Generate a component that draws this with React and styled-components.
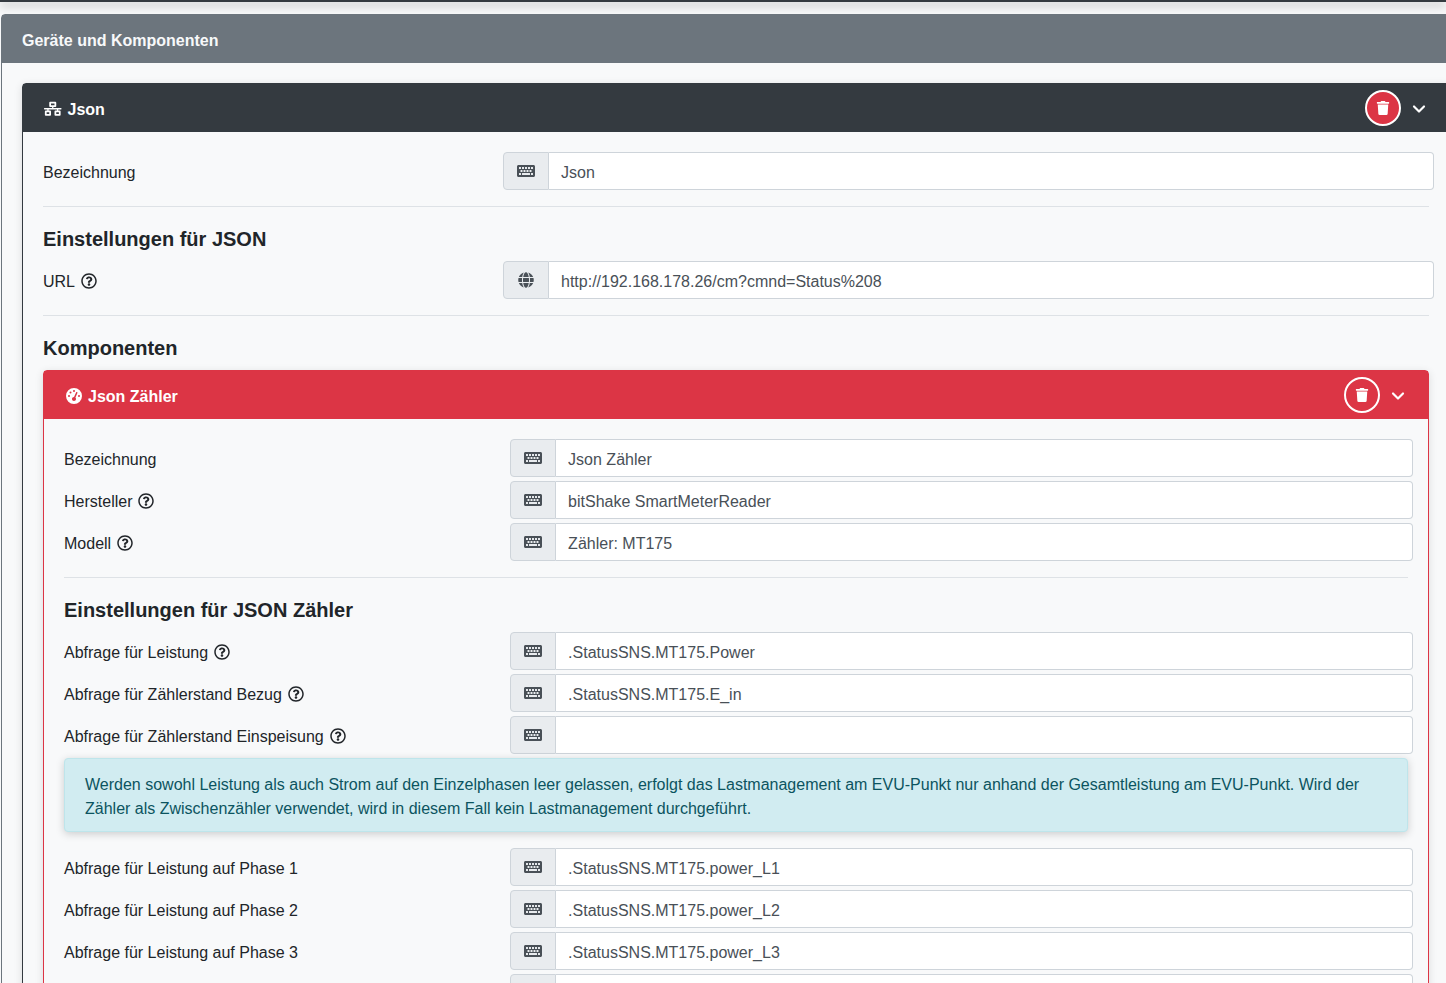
import styled, { createGlobalStyle } from 'styled-components';
import { ChevronDown } from 'lucide-react';
import { FaGlobe, FaKeyboard, FaNetworkWired, FaRegQuestionCircle, FaTrash } from 'react-icons/fa';
import { FaGaugeHigh } from 'react-icons/fa6';

const GlobalStyle = createGlobalStyle`
    html, body {
        margin: 0;
        padding: 0;
        background-color: #f8f9fa;
    }
    body {
        font-family: 'Liberation Sans', Arial, sans-serif;
        font-size: 16px;
        line-height: 24px;
        color: #212529;
    }
`

const ICONS = { keyboard: FaKeyboard, globe: FaGlobe };

export default function App() {
    return (
        <Page>
            <GlobalStyle />
            <TopBar />
            <MainCard>
                <MainHeader>Geräte und Komponenten</MainHeader>
                <MainBody>
                    <Card $color="#343a40">
                        <CardHeader $color="#343a40">
                            <HeaderTitle><FaNetworkWired size={17.5} />Json</HeaderTitle>
                            <HeaderActions />
                        </CardHeader>
                        <CardBody>
                            <Field label="Bezeichnung" value="Json" />
                            <Divider />
                            <Heading>Einstellungen für JSON</Heading>
                            <Field label="URL" help icon="globe" value="http://192.168.178.26/cm?cmnd=Status%208" />
                            <Divider />
                            <Heading>Komponenten</Heading>
                            <Card $color="#dc3545">
                                <CardHeader $color="#dc3545">
                                    <HeaderTitle><GaugeIcon size={16} />Json Zähler</HeaderTitle>
                                    <HeaderActions />
                                </CardHeader>
                                <CardBody>
                                    <Rows>
                                        <Field label="Bezeichnung" value="Json Zähler" />
                                        <Field label="Hersteller" help value="bitShake SmartMeterReader" />
                                        <Field label="Modell" help value="Zähler: MT175" />
                                    </Rows>
                                    <Divider />
                                    <Heading>Einstellungen für JSON Zähler</Heading>
                                    <Rows>
                                        <Field label="Abfrage für Leistung" help value=".StatusSNS.MT175.Power" />
                                        <Field label="Abfrage für Zählerstand Bezug" help value=".StatusSNS.MT175.E_in" />
                                        <Field label="Abfrage für Zählerstand Einspeisung" help value="" />
                                        <Alert>
                                            Werden sowohl Leistung als auch Strom auf den Einzelphasen leer gelassen, erfolgt das Lastmanagement am EVU-Punkt nur anhand der Gesamtleistung am EVU-Punkt. Wird der Zähler als Zwischenzähler verwendet, wird in diesem Fall kein Lastmanagement durchgeführt.
                                        </Alert>
                                        <Field label="Abfrage für Leistung auf Phase 1" value=".StatusSNS.MT175.power_L1" />
                                        <Field label="Abfrage für Leistung auf Phase 2" value=".StatusSNS.MT175.power_L2" />
                                        <Field label="Abfrage für Leistung auf Phase 3" value=".StatusSNS.MT175.power_L3" />
                                        <Field label="" value="" />
                                    </Rows>
                                </CardBody>
                            </Card>
                        </CardBody>
                    </Card>
                </MainBody>
            </MainCard>
        </Page>
    )
}

function HeaderActions() {
    return (
        <Actions>
            <DeleteButton><FaTrash size={14} /></DeleteButton>
            <Chevron><ChevronDown size={24} strokeWidth={2.6} /></Chevron>
        </Actions>
    )
}

function Field({ label, help, icon = 'keyboard', value }) {
    const Icon = ICONS[icon];
    return (
        <Row>
            <Label>
                {label}
                {help && <FaRegQuestionCircle size={16} />}
            </Label>
            <InputGroup>
                <Addon><Icon size={icon === 'globe' ? 16 : 18} /></Addon>
                <Input type="text" defaultValue={value} readOnly />
            </InputGroup>
        </Row>
    )
}

const Page = styled.div`
    width: 100vw;
    height: 100vh;
    overflow: hidden;
`
const TopBar = styled.div`
    height: 2px;
    background-color: #343a40;
    box-shadow: 0 3px 10px rgba(0, 0, 0, 0.5);
`
const MainCard = styled.section`
    width: 1470px;
    margin: 12px 0 0 1px;
    border: 1px solid #6c757d;
    border-radius: 4px;
    box-sizing: border-box;
`
const MainHeader = styled.h1`
    margin: 0;
    height: 48px;
    box-sizing: border-box;
    display: flex;
    align-items: center;
    padding: 4px 20px 0;
    background-color: #6c757d;
    font-size: 16px;
    font-weight: 700;
    color: #f8f9fa;
`
const MainBody = styled.div`
    padding: 20px;
`
const Card = styled.section`
    width: 100%;
    box-sizing: border-box;
    border: 1px solid ${props => props.$color};
    border-radius: 4px;
    box-shadow: 0 2px 8px rgba(0, 0, 0, 0.12);
`
const CardHeader = styled.header`
    height: 48px;
    display: flex;
    align-items: center;
    justify-content: space-between;
    padding: 0 20px 0 21px;
    background-color: ${props => props.$color};
    color: #ffffff;
`
const HeaderTitle = styled.h2`
    margin: 0;
    padding-top: 4px;
    display: flex;
    align-items: center;
    gap: 6px;
    font-size: 16px;
    font-weight: 700;
    svg {
        margin-top: -2px;
    }
`
const GaugeIcon = styled(FaGaugeHigh)`
    margin-left: 1px;
`
const Actions = styled.div`
    display: flex;
    align-items: center;
    gap: 8px;
`
const DeleteButton = styled.button`
    width: 36px;
    height: 36px;
    display: flex;
    align-items: center;
    justify-content: center;
    padding: 0;
    border: 2px solid #ffffff;
    border-radius: 50%;
    background-color: #dc3545;
    color: #ffffff;
`
const Chevron = styled.span`
    width: 20px;
    height: 24px;
    margin-top: 2px;
    display: flex;
    justify-content: center;
    color: #ffffff;
`
const CardBody = styled.div`
    padding: 20px;
`
const Rows = styled.div`
    display: flex;
    flex-direction: column;
    gap: 4px;
`
const Row = styled.div`
    display: grid;
    grid-template-columns: 33.07% 1fr;
    align-items: center;
    margin-right: -5px;
`
const Label = styled.label`
    padding-top: 4px;
    display: flex;
    align-items: center;
    gap: 6px;
    svg {
        margin-top: -2px;
    }
`
const InputGroup = styled.div`
    display: flex;
    height: 38px;
`
const Addon = styled.span`
    width: 44px;
    flex-shrink: 0;
    display: flex;
    align-items: center;
    justify-content: center;
    border: 1px solid #ced4da;
    border-radius: 4px 0 0 4px;
    background-color: #e9ecef;
    color: #495057;
`
const Input = styled.input`
    flex: 1;
    min-width: 0;
    padding: 8px 12px 4px;
    border: 1px solid #ced4da;
    border-left: none;
    border-radius: 0 4px 4px 0;
    background-color: #ffffff;
    font-family: inherit;
    font-size: 16px;
    line-height: 24px;
    color: #495057;
`
const Divider = styled.hr`
    margin: 16px 0 0;
    border: none;
    border-top: 1px solid #dee2e6;
`
const Heading = styled.h3`
    margin: 20px 0 10px;
    font-size: 20px;
    line-height: 24px;
    font-weight: 700;
`
const Alert = styled.div`
    margin-bottom: 12px;
    padding: 14px 20px 10px;
    border: 1px solid #bee5eb;
    border-radius: 4px;
    background-color: #d1ecf1;
    box-shadow: 0 2px 8px rgba(0, 0, 0, 0.18);
    color: #0c5460;
`
